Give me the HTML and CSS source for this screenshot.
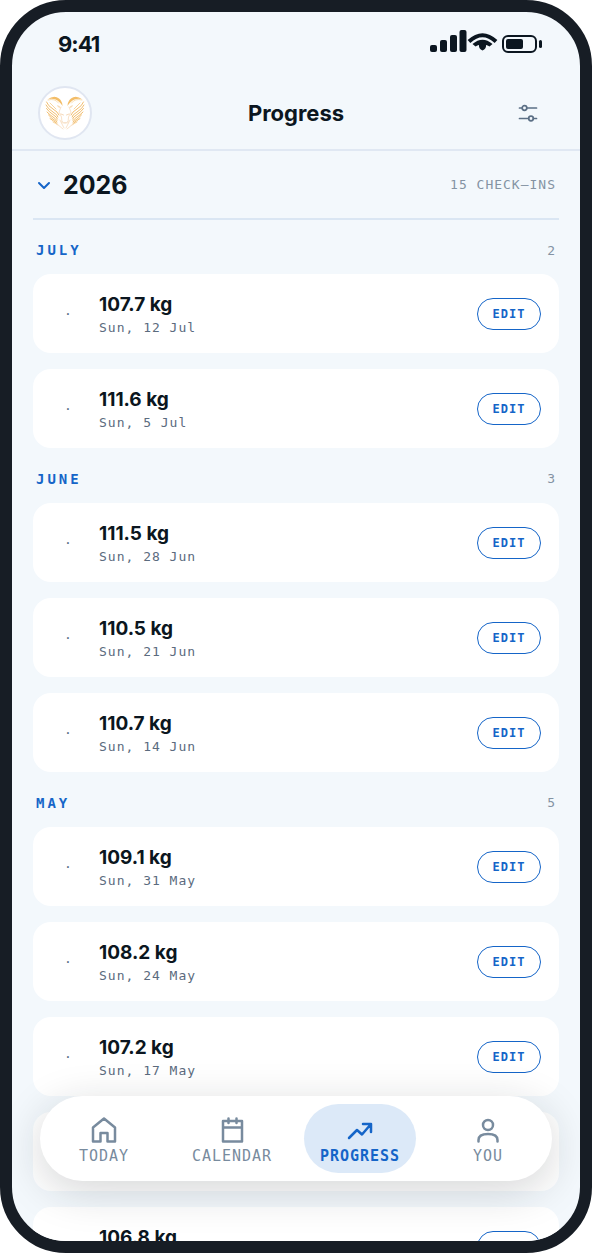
FILE: index.html
```html
<!DOCTYPE html>
<html lang="en">
<head>
  <meta charset="UTF-8" />
  <title>Progress</title>
  <meta name="viewport" content="width=device-width, initial-scale=1" />
  <link rel="stylesheet" href="styles.css">
</head>
<body>

  <div class="phone">
    <div class="status-bar">
      <span class="clock">9:41</span>
      <svg class="status-icons" width="112" height="24" viewBox="0 0 112 24" fill="#0b1620" aria-hidden="true">
        <rect x="0" y="15" width="7" height="7" rx="2"/>
        <rect x="10" y="10" width="7" height="12" rx="2"/>
        <rect x="20" y="5" width="7" height="17" rx="2"/>
        <rect x="29.500" y="0" width="7" height="22" rx="2"/>
        <path d="M39 11.500Q52.500 -1 66 11.500" fill="none" stroke="#0b1620" stroke-width="4"/>
        <path d="M42.500 14Q52.500 5.500 62.500 14L59.500 16.500Q57.500 15 56 15Q56.500 18.500 52.500 20.500Q48.500 18.500 49 15Q47.500 15 45.500 16.500Z"/>
        <rect x="73" y="6" width="33" height="16" rx="5" fill="none" stroke="#0b1620" stroke-width="2"/>
        <rect x="76" y="9" width="17" height="10" rx="2"/>
        <rect x="109" y="10" width="3" height="8" rx="1.500"/>
      </svg>
    </div>

    <header class="top-bar">
      <a class="logo" href="#" aria-label="Home">
        <svg width="40" height="36" viewBox="0 0 40 36" fill="none" stroke="#efb55e" stroke-linecap="round">
          <g id="half">
            <path d="M2.500 4.500Q9 -.5 14 3.500Q17.500 6.500 17.500 11Q14.500 6 10.500 4.500Q6 3 2.500 4.500Z" fill="#f3bd68" stroke="none"/>
            <path d="M3 5Q10 3 13.500 8" stroke="#f7d7a2" stroke-width=".8"/>
            <path d="M1.500 7Q3 11 8 14T14 20M1 10Q3 14 8 17T13 22M1.500 13.500Q4 17 8 19.500T12.500 24M2 17Q5 20 8 22T12 25.500M3.500 20Q6 23 12 27M5 23.500Q8 25.500 12 28.500" stroke-width=".9"/>
            <path d="M5 8Q8 11 11 14M8 27Q11 28.500 13 30" stroke="#f4c987" stroke-width=".8"/>
            <path d="M12 10Q12.500 13 16 13Q15 10.500 12 10Z" fill="#f7dcb8" stroke="none"/>
            <path d="M16 12L14 17L16.500 22L17 28M15 25L19 33M12 29L18 34" stroke="#f8dfc3" stroke-width=".9"/>
            <path d="M16 19L18.500 20M17.500 27Q19 29 20 28" stroke="#f1cda5" stroke-width=".8"/>
          </g>
          <use href="#half" transform="translate(40 0) scale(-1 1)"/>
        </svg>
      </a>
      <h1>Progress</h1>
      <button class="filter-btn" type="button" aria-label="Filter">
        <svg width="20" height="20" viewBox="0 0 20 20" fill="none" stroke="#5b6f85" stroke-width="1.700" stroke-linecap="round">
          <path d="M1.500 5H4M9 5H18.500M1.500 15.500H10.500M15.500 15.500H18.500"/>
          <circle cx="6.500" cy="5" r="2.300"/>
          <circle cx="13" cy="15.500" r="2.300"/>
        </svg>
      </button>
    </header>

    <main class="history">
      <button class="year" type="button" aria-expanded="true">
        <svg width="14" height="14" viewBox="0 0 14 14" fill="none" stroke="#1565c8" stroke-width="2" stroke-linecap="round" stroke-linejoin="round">
          <path d="M2 5L7 10L12 5"/>
        </svg>
        <span class="year-name">2026</span>
        <span class="count">15 CHECK–INS</span>
      </button>

      <section class="month">
        <div class="month-head"><h2>JULY</h2><span class="count">2</span></div>
        <ul class="entries">
          <li class="entry">
            <span class="thumb">·</span>
            <div class="info"><p class="weight">107.7 kg</p><p class="date">Sun, 12 Jul</p></div>
            <button class="edit-btn" type="button">EDIT</button>
          </li>
          <li class="entry">
            <span class="thumb">·</span>
            <div class="info"><p class="weight">111.6 kg</p><p class="date">Sun, 5 Jul</p></div>
            <button class="edit-btn" type="button">EDIT</button>
          </li>
        </ul>
      </section>

      <section class="month">
        <div class="month-head"><h2>JUNE</h2><span class="count">3</span></div>
        <ul class="entries">
          <li class="entry">
            <span class="thumb">·</span>
            <div class="info"><p class="weight">111.5 kg</p><p class="date">Sun, 28 Jun</p></div>
            <button class="edit-btn" type="button">EDIT</button>
          </li>
          <li class="entry">
            <span class="thumb">·</span>
            <div class="info"><p class="weight">110.5 kg</p><p class="date">Sun, 21 Jun</p></div>
            <button class="edit-btn" type="button">EDIT</button>
          </li>
          <li class="entry">
            <span class="thumb">·</span>
            <div class="info"><p class="weight">110.7 kg</p><p class="date">Sun, 14 Jun</p></div>
            <button class="edit-btn" type="button">EDIT</button>
          </li>
        </ul>
      </section>

      <section class="month">
        <div class="month-head"><h2>MAY</h2><span class="count">5</span></div>
        <ul class="entries">
          <li class="entry">
            <span class="thumb">·</span>
            <div class="info"><p class="weight">109.1 kg</p><p class="date">Sun, 31 May</p></div>
            <button class="edit-btn" type="button">EDIT</button>
          </li>
          <li class="entry">
            <span class="thumb">·</span>
            <div class="info"><p class="weight">108.2 kg</p><p class="date">Sun, 24 May</p></div>
            <button class="edit-btn" type="button">EDIT</button>
          </li>
          <li class="entry">
            <span class="thumb">·</span>
            <div class="info"><p class="weight">107.2 kg</p><p class="date">Sun, 17 May</p></div>
            <button class="edit-btn" type="button">EDIT</button>
          </li>
          <li class="entry"></li>
          <li class="entry">
            <span class="thumb"></span>
            <div class="info"><p class="weight">106.8 kg</p><p class="date"></p></div>
            <button class="edit-btn" type="button" aria-label="Edit"></button>
          </li>
        </ul>
      </section>
    </main>

    <nav class="tab-bar">
      <a class="tab" href="#today">
        <svg width="28" height="28" viewBox="0 0 28 28">
          <path d="M3 11.500L14 2.500L25 11.500V25.500H17.500V17H10.500V25.500H3Z"/>
        </svg>
        TODAY
      </a>
      <a class="tab" href="#calendar">
        <svg width="28" height="28" viewBox="0 0 28 28">
          <path d="M5 5H24V25.500H5ZM5 11.500H24M10.500 2.500V7M18.500 2.500V7"/>
        </svg>
        CALENDAR
      </a>
      <a class="tab active" href="#progress" aria-current="page">
        <svg width="28" height="28" viewBox="0 0 28 28">
          <path d="M3 22L11 14L16 18.500L25 8M17 8H25V16"/>
        </svg>
        PROGRESS
      </a>
      <a class="tab" href="#you">
        <svg width="28" height="28" viewBox="0 0 28 28">
          <circle cx="14" cy="9" r="5"/>
          <path d="M4.500 25.500V24Q4.500 18 14 18T23.500 24V25.500"/>
        </svg>
        YOU
      </a>
    </nav>
  </div>

</body>
</html>
```
FILE: styles.css
```css
* {
  box-sizing: border-box;
  margin: 0;
  padding: 0;
}

body {
  font-family: Inter, sans-serif;
  background: #fff;
  color: #0b1620;
}

button {
  font: inherit;
  color: inherit;
  background: none;
  border: none;
  cursor: pointer;
}

a {
  text-decoration: none;
}

.phone {
  position: relative;
  display: flex;
  flex-direction: column;
  height: 100vh;
  overflow: hidden;
  background: #f3f8fc;
  border: 12px solid #171d25;
  border-radius: 66px;
}

.status-bar {
  display: flex;
  flex-shrink: 0;
  justify-content: space-between;
  align-items: center;
  height: 64px;
  padding: 0 38px 0 46px;
}

.clock {
  font-size: 22px;
  font-weight: 700;
  letter-spacing: -1px;
}

.status-icons {
  margin-bottom: 4px;
}

.top-bar {
  display: grid;
  flex-shrink: 0;
  grid-template-columns: 1fr auto 1fr;
  align-items: center;
  height: 75px;
  padding: 0 26px;
  border-bottom: 2px solid #e0e8f3;
}

.logo {
  display: flex;
  justify-content: center;
  align-items: center;
  width: 54px;
  height: 54px;
  background: #fff;
  border: 2px solid #e0e6f1;
  border-radius: 50%;
}

.top-bar h1 {
  font-size: 22px;
  font-weight: 700;
}

.filter-btn {
  display: flex;
  justify-self: end;
  justify-content: center;
  align-items: center;
  width: 52px;
  height: 52px;
}

.history {
  flex: 1;
  min-height: 0;
  overflow: hidden;
  padding: 0 21px;
}

.year {
  display: flex;
  align-items: center;
  gap: 12px;
  width: 100%;
  height: 69px;
  padding: 0 3px 0 4px;
  border-bottom: 2px solid #dae6f3;
}

.year-name {
  font-size: 25px;
  font-weight: 700;
}

.count {
  margin-left: auto;
  font-family: "DejaVu Sans Mono", monospace;
  font-size: 13px;
  letter-spacing: 1px;
  color: #8493a3;
}

.month-head {
  display: flex;
  align-items: center;
  height: 54px;
  padding: 6px 3px 0;
}

.month + .month .month-head {
  height: 55px;
}

.month-head h2 {
  font-family: "DejaVu Sans Mono", monospace;
  font-size: 14px;
  font-weight: 700;
  letter-spacing: 3px;
  color: #1565c8;
}

.entries {
  display: flex;
  flex-direction: column;
  gap: 16px;
  list-style: none;
}

.entry {
  display: flex;
  align-items: center;
  gap: 14px;
  height: 79px;
  padding: 0 18px;
  background: #fff;
  border-radius: 18px;
}

.thumb {
  width: 34px;
  text-align: center;
  font-family: "DejaVu Sans Mono", monospace;
  font-size: 13px;
  color: #5b6f85;
}

.info {
  flex: 1;
  padding-top: 2px;
}

.weight {
  font-size: 19px;
  font-weight: 700;
  line-height: 26px;
}

.date {
  min-height: 20px;
  font-family: "DejaVu Sans Mono", monospace;
  font-size: 13px;
  line-height: 20px;
  letter-spacing: 1px;
  color: #5b6b7e;
}

.edit-btn {
  width: 64px;
  height: 32px;
  border: 1px solid #1565c8;
  border-radius: 16px;
  font-family: "DejaVu Sans Mono", monospace;
  font-size: 12px;
  font-weight: 700;
  letter-spacing: 1px;
  color: #1565c8;
}

/* floats over the list */
.tab-bar {
  position: absolute;
  left: 28px;
  right: 28px;
  bottom: 60px;
  display: grid;
  grid-template-columns: repeat(4, 1fr);
  gap: 16px;
  padding: 8px;
  background: #fff;
  border-radius: 43px;
  box-shadow: 0 10px 44px rgba(20, 25, 35, 0.18);
}

.tab {
  display: flex;
  flex-direction: column;
  justify-content: center;
  align-items: center;
  gap: 2px;
  height: 69px;
  padding-top: 4px;
  border-radius: 35px;
  font-family: "DejaVu Sans Mono", monospace;
  font-size: 15px;
  line-height: 20px;
  letter-spacing: 1px;
  color: #788b9e;
}

.tab svg {
  fill: none;
  stroke: currentColor;
  stroke-width: 2.5;
  stroke-linecap: round;
  stroke-linejoin: round;
}

.tab.active {
  background: #dce9f8;
  color: #1565c8;
  font-weight: 700;
}
```
